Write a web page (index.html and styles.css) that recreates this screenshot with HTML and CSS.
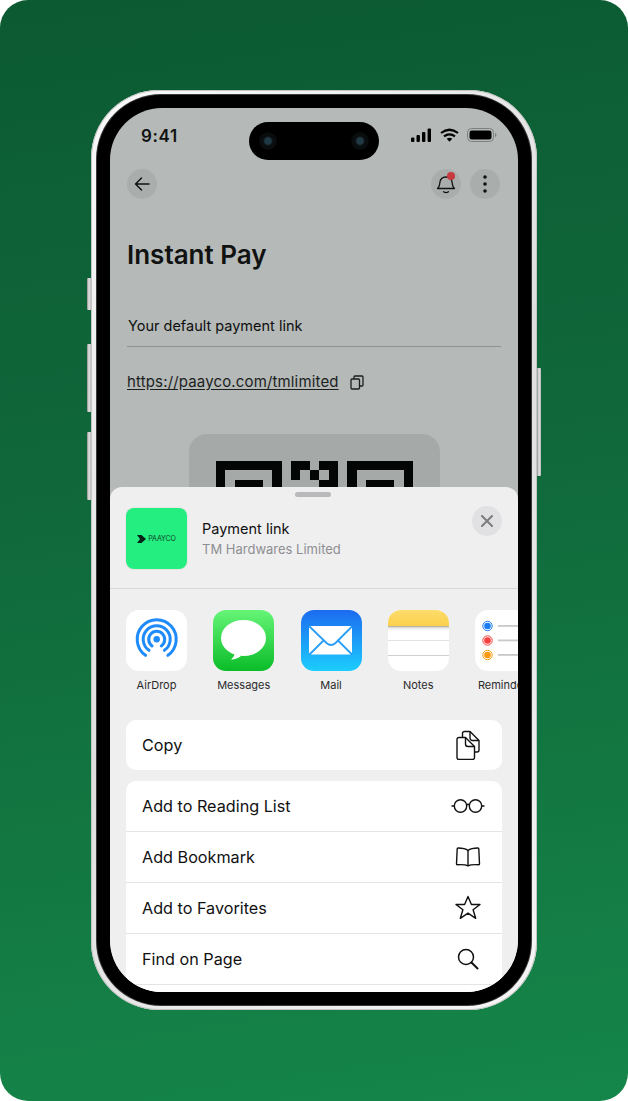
FILE: index.html
```html
<!DOCTYPE html>
<html lang="en">
<head>
<meta charset="utf-8">
<title>Instant Pay</title>
<link rel="stylesheet" href="styles.css">
</head>
<body>
<main class="card">
  <div class="phone">
    <span class="key key-a"></span><span class="key key-b"></span><span class="key key-c"></span><span class="key key-d"></span>
    <div class="bezel">
      <div class="screen">
        <div class="status">
          <span class="time">9:41</span>
          <div class="island">
            <span class="lens"></span><span class="lens"></span>
          </div>
          <div class="status-icons">
            <svg width="21" height="14" viewBox="0 0 21 14"><rect x="0" y="9.5" width="3.4" height="4.5" rx="1"/><rect x="5.5" y="7" width="3.4" height="7" rx="1"/><rect x="11" y="4" width="3.4" height="10" rx="1"/><rect x="16.6" y="0.5" width="3.4" height="13.5" rx="1"/></svg>
            <svg width="19" height="14" viewBox="0 0 19 14" fill="none" stroke="#000" stroke-width="2.2"><path d="M1 5q8.500-6.500 17 0"/><path d="M4 8.300q5.500-4 11 0"/><path d="M9.500 13.800 6.700 10.800q2.800-2 5.600 0z" fill="#000" stroke="none"/></svg>
            <svg width="30" height="14" viewBox="0 0 30 14"><rect x="0.500" y="0.500" width="26" height="13" rx="4" fill="none" stroke="#7d807f"/><rect x="2.500" y="2.500" width="22" height="9" rx="2.300"/><path d="M28 5v4q1.500-.6 1.500-2T28 5z" fill="#7d807f"/></svg>
          </div>
        </div>

        <div class="content">
          <nav class="nav">
            <span class="round"><svg width="18" height="18" viewBox="0 0 18 18" fill="none" stroke="#111" stroke-width="1.500" stroke-linecap="round" stroke-linejoin="round"><path d="M16 9H2.500M8.500 3l-6 6 6 6"/></svg></span>
            <span class="nav-right">
              <span class="round bell">
                <svg width="20" height="22" viewBox="0 0 20 22" fill="none" stroke="#111" stroke-width="1.300" stroke-linecap="round" stroke-linejoin="round"><path d="M1.500 15.500c1.500-1 2-2.500 2.300-5.500.3-3.500 2.500-6 6.200-6s5.900 2.500 6.200 6c.3 3 .8 4.500 2.300 5.500z"/><path d="M7.500 18.800q2.500 1.700 5 0"/></svg>
                <span class="badge"></span>
              </span>
              <span class="round"><svg width="4" height="18" viewBox="0 0 4 18" fill="#111"><circle cx="2" cy="2" r="1.800"/><circle cx="2" cy="9" r="1.800"/><circle cx="2" cy="16" r="1.800"/></svg></span>
            </span>
          </nav>
          <h1 class="title">Instant Pay</h1>
          <p class="label">Your default payment link</p>
          <div class="url-row">
            <a class="url">https://paayco.com/tmlimited</a>
            <svg width="14" height="15" viewBox="0 0 14 15" fill="none" stroke="#1c1f1e" stroke-width="1.300" stroke-linejoin="round"><rect x="1" y="4" width="8.500" height="10" rx="1"/><path d="M4 4V2a1 1 0 0 1 1-1h7a1 1 0 0 1 1 1v8a1 1 0 0 1-1 1H9.500"/></svg>
          </div>
          <div class="qr">
            <svg class="qr-code" width="197" height="197" viewBox="0 0 21 21" shape-rendering="crispEdges"><path d="M0 0h7v7H0zM1 1v5h5V1zM2 2h3v3H2zM14 0h7v7h-7zM15 1v5h5V1zM16 2h3v3h-3zM8 0h2v1H8zM11 0h2v1h-2zM8 1h1v1H8zM10 1h1v1h-1zM12 1h1v1h-1zM11 2h2v1h-2z" fill-rule="evenodd" fill="#040605"/></svg>
          </div>
        </div>

        <section class="sheet">
          <div class="grabber"></div>
          <header class="sheet-head">
            <div class="thumb">
              <svg width="9" height="8" viewBox="0 0 9 8"><path d="M0 0h4.500L9 4 4.500 8H0l3-4z" fill="#04241a"/></svg>
              <span class="thumb-text">PAAYCO</span>
            </div>
            <div class="sheet-title">
              <div class="sheet-name">Payment link</div>
              <div class="sheet-sub">TM Hardwares Limited</div>
            </div>
            <span class="close"><svg width="12" height="12" viewBox="0 0 12 12" fill="none" stroke="#7c7c80" stroke-width="2" stroke-linecap="round"><path d="M1 1l10 10M11 1L1 11"/></svg></span>
          </header>

          <div class="apps">
            <div class="app">
              <svg class="app-icon" width="61" height="61" viewBox="0 0 61 61"><rect width="61" height="61" rx="13" fill="#fff"/><g fill="none" stroke="#1f8bfb" stroke-width="3" stroke-linecap="round"><path d="M19.500 45.300A19.500 19.500 0 1 1 41.900 45.300"/><path d="M23 40.300A13.500 13.500 0 1 1 38.400 40.300"/><path d="M26.100 35.900A8 8 0 1 1 35.300 35.900"/></g><circle cx="30.700" cy="29.300" r="3.200" fill="#1f8bfb"/></svg>
              <span class="app-name">AirDrop</span>
            </div>
            <div class="app">
              <svg class="app-icon" width="61" height="61" viewBox="0 0 61 61"><defs><linearGradient id="msg" x1="0" y1="0" x2="0" y2="1"><stop offset="0" stop-color="#66f577"/><stop offset="1" stop-color="#0abc28"/></linearGradient></defs><rect width="61" height="61" rx="13" fill="url(#msg)"/><ellipse cx="30.500" cy="28" rx="22.500" ry="18" fill="#fff"/><path d="M22 42c0 3-2 6-4 7.500 3 .3 7-1 10-3.500z" fill="#fff"/></svg>
              <span class="app-name">Messages</span>
            </div>
            <div class="app">
              <svg class="app-icon" width="61" height="61" viewBox="0 0 61 61"><defs><linearGradient id="mail" x1="0" y1="0" x2="0" y2="1"><stop offset="0" stop-color="#1c6bf0"/><stop offset="1" stop-color="#1ccdfd"/></linearGradient></defs><rect width="61" height="61" rx="13" fill="url(#mail)"/><rect x="8" y="16" width="43" height="28.500" rx="2" fill="#fff"/><path d="M8.500 16.500 25.500 33q4.500 4 9 0l16.500-16.500M8.500 44.500l14-14M51 44.500l-14-14" fill="none" stroke="#2a9df6" stroke-width="1.800"/></svg>
              <span class="app-name">Mail</span>
            </div>
            <div class="app">
              <svg class="app-icon" width="61" height="61" viewBox="0 0 61 61"><defs><linearGradient id="note" x1="0" y1="0" x2="0" y2="1"><stop offset="0" stop-color="#fcdc6c"/><stop offset="1" stop-color="#fbd04c"/></linearGradient><clipPath id="noteclip"><rect width="61" height="61" rx="13"/></clipPath></defs><g clip-path="url(#noteclip)"><rect width="61" height="61" fill="#fff"/><rect width="61" height="16" fill="url(#note)"/><rect y="16" width="61" height="1.500" fill="#b8b6a8"/><rect y="18" width="61" height="1.500" fill="#ececec"/><rect y="30" width="61" height="1" fill="#e2e2e2"/><rect y="45" width="61" height="1" fill="#d0d0d0"/></g></svg>
              <span class="app-name">Notes</span>
            </div>
            <div class="app">
              <svg class="app-icon" width="61" height="61" viewBox="0 0 61 61"><rect width="61" height="61" rx="13" fill="#fff"/><g fill="none" stroke-width="1"><circle cx="12.500" cy="16" r="4.700" stroke="#1b7cf5"/><circle cx="12.500" cy="30.500" r="4.700" stroke="#f9403c"/><circle cx="12.500" cy="45" r="4.700" stroke="#fb9a0e"/></g><circle cx="12.500" cy="16" r="3.300" fill="#1b7cf5"/><circle cx="12.500" cy="30.500" r="3.300" fill="#f9403c"/><circle cx="12.500" cy="45" r="3.300" fill="#fb9a0e"/><g fill="#c9c9cb"><rect x="23" y="15" width="38" height="1.800"/><rect x="23" y="29.500" width="38" height="1.800"/><rect x="23" y="44" width="38" height="1.800"/></g></svg>
              <span class="app-name">Reminders</span>
            </div>
          </div>

          <div class="group">
            <div class="row row-first">
              <span>Copy</span>
              <svg width="26" height="30" viewBox="0 0 26 30" fill="none" stroke="#111" stroke-width="1.400" stroke-linejoin="round"><path d="M7.500 7V3.500a2 2 0 0 1 2-2H15l9 9V20a2 2 0 0 1-2 2h-2.500"/><path d="M15 1.500V8a2.500 2.500 0 0 0 2.500 2.500H24"/><path d="M2 9.500a2 2 0 0 1 2-2h6.500l9 9v11a2 2 0 0 1-2 2H4a2 2 0 0 1-2-2z"/><path d="M10.500 7.500V14a2.500 2.500 0 0 0 2.500 2.500h6.500"/></svg>
            </div>
          </div>
          <div class="group group-list">
            <div class="row">
              <span>Add to Reading List</span>
              <svg width="34" height="16" viewBox="0 0 34 16" fill="none" stroke="#111" stroke-width="1.400" stroke-linecap="round"><circle cx="9.500" cy="8" r="6.200"/><circle cx="24.500" cy="8" r="6.200"/><path d="M15.700 7q1.800-1.500 2.600 0M3.300 8H1M30.700 8H33"/></svg>
            </div>
            <div class="row">
              <span>Add Bookmark</span>
              <svg width="26" height="20" viewBox="0 0 26 20" fill="none" stroke="#111" stroke-width="1.400" stroke-linejoin="round"><path d="M13 3.500C11 1.800 8 1 3 1 2.500 1 2.200 1.300 2.200 1.800L1.500 17c0 .4.300.7.700.7C7 17.500 10.800 17.500 13 19c2.200-1.500 6-1.500 10.800-1.300.4 0 .7-.3.700-.7l-.7-15.200c0-.5-.3-.8-.8-.8C18 1 15 1.800 13 3.500z"/><path d="M13 3.500V19"/></svg>
            </div>
            <div class="row">
              <span>Add to Favorites</span>
              <svg width="26" height="25" viewBox="0 0 26 25" fill="none" stroke="#111" stroke-width="1.400" stroke-linejoin="round"><path d="M13 1.500l3.400 8h8.600l-6.900 5.300 2.600 8.500L13 18.200l-7.700 5.100 2.600-8.500L1 9.500h8.600z"/></svg>
            </div>
            <div class="row">
              <span>Find on Page</span>
              <svg width="22" height="22" viewBox="0 0 22 22" fill="none" stroke="#111" stroke-width="1.500" stroke-linecap="round"><circle cx="9" cy="9" r="7.500"/><path d="M14.500 14.500l6 6" stroke-width="2"/></svg>
            </div>
            <div class="row"></div>
          </div>
        </section>
      </div>
    </div>
  </div>
</main>
</body>
</html>
```

FILE: styles.css
```css
* { box-sizing: border-box; }
html, body { margin: 0; padding: 0; background: #fff; }
body { font-family: Inter, "Liberation Sans", sans-serif; }
.card {
  width: 628px;
  height: 1101px;
  border-radius: 28px;
  overflow: hidden;
  padding-top: 90px;
  display: flex;
  justify-content: center;
  align-items: flex-start;
  background: linear-gradient(172deg, #0c5a32 0%, #10693b 45%, #158649 100%);
}
.phone {
  position: relative;
  width: 446px;
  height: 920px;
  padding: 5px 6px;
  border-radius: 68px;
  background: linear-gradient(135deg, #fafafa, #dddedd 50%, #f6f6f6);
  box-shadow: inset 0 0 0 1px #c4c6c5;
}
.key { position: absolute; width: 4px; background: linear-gradient(90deg, #8d8f8e, #e6e6e6 50%, #b6b8b7); border-radius: 1px 0 0 1px; }
.key-a { left: -4px; top: 188px; height: 32px; }
.key-b { left: -4px; top: 254px; height: 68px; }
.key-c { left: -4px; top: 342px; height: 68px; }
.key-d { right: -4px; top: 278px; height: 108px; border-radius: 0 1px 1px 0; }
.bezel {
  height: 100%;
  padding: 13px;
  border-radius: 64px;
  background: #000;
  box-shadow: 0 0 0 1px #3a3a3a;
}
.screen {
  position: relative;
  height: 100%;
  border-radius: 52px;
  overflow: hidden;
  background: #b5b9b7;
  color: #101211;
}
.status {
  display: grid;
  grid-template-columns: 1fr 130px 1fr;
  padding: 14px 21px 0;
  align-items: center;
}
.time { padding-left: 10px; margin-top: -10px; font-size: 17px; font-weight: 600; line-height: 28px; letter-spacing: .6px; }
.island {
  width: 130px;
  height: 38px;
  border-radius: 19px;
  background: #000;
  display: flex;
  justify-content: space-between;
  align-items: center;
  padding: 0 10px;
}
.lens {
  width: 18px;
  height: 18px;
  border-radius: 50%;
  background: radial-gradient(circle, #1f3a45 0 3px, #0a0d0e 5px 8px, #060606 9px);
}
.status-icons {
  display: flex;
  justify-content: flex-end;
  align-items: center;
  gap: 8px;
  margin-top: -12px;
}
.content { padding: 9px 17px 0; }
.nav { display: flex; justify-content: space-between; align-items: center; }
.nav-right { display: flex; gap: 9px; margin-right: 1px; }
.round {
  position: relative;
  width: 30px;
  height: 30px;
  border-radius: 50%;
  background: #a9aead;
  display: flex;
  align-items: center;
  justify-content: center;
}
.badge {
  position: absolute;
  top: 3px;
  right: 6px;
  width: 8px;
  height: 8px;
  border-radius: 50%;
  background: #c73a3e;
}
.title { margin: 39px 0 0; font-size: 26px; line-height: 34px; font-weight: 600; }
.label {
  margin: 44px 0 0;
  padding: 0 0 10px 1px;
  font-size: 14.500px;
  line-height: 20px;
  color: #0d0f0e;
  border-bottom: 1px solid #8e9392;
}
.url-row { display: flex; align-items: center; gap: 11px; margin-top: 25px; height: 20px; }
.url { font-size: 15px; line-height: 20px; text-decoration: underline; text-underline-offset: 2px; letter-spacing: .15px; color: #1c1f1e; }
.qr {
  width: 251px;
  height: 260px;
  margin: 42px 0 0 62px;
  padding: 27px;
  border-radius: 18px;
  background: #a5aaa8;
}
.qr-code { display: block; }
.sheet {
  position: absolute;
  left: 0;
  right: 0;
  top: 379px;
  bottom: 0;
  border-radius: 12px 12px 0 0;
  background: #efefef;
  overflow: hidden;
}
.grabber { width: 36px; height: 5px; margin: 5px auto 0; transform: translateX(-1px); border-radius: 3px; background: #b9b9bb; }
.sheet-head {
  display: flex;
  align-items: center;
  gap: 15px;
  padding: 11px 16px 19px;
  border-bottom: 1px solid #d8d8d9;
}
.thumb {
  width: 61px;
  height: 61px;
  flex: none;
  border-radius: 8px;
  background: #25ee80;
  display: flex;
  align-items: center;
  justify-content: center;
  gap: 2px;
  box-shadow: 0 0 2px rgba(0,0,0,.12);
}
.thumb-text { font-size: 7px; line-height: 8px; color: #0c3a26; letter-spacing: -.1px; }
.sheet-title { flex: 1; }
.sheet-name { font-size: 14.500px; line-height: 20px; color: #111; }
.sheet-sub { font-size: 13px; line-height: 20px; color: #8e8e93; }
.close {
  align-self: flex-start;
  margin-top: -2px;
  width: 30px;
  height: 30px;
  border-radius: 50%;
  background: #e1e1e3;
  display: flex;
  align-items: center;
  justify-content: center;
}
.apps { display: flex; gap: 26.250px; padding: 21px 0 0 16px; overflow: hidden; height: 103px; }
.app { width: 61px; flex: none; display: flex; flex-direction: column; align-items: center; }
.app-icon { display: block; flex: none; }
.app-name { margin-top: 7px; font-size: 11px; line-height: 14px; color: #2a2a2c; white-space: nowrap; }
.group { margin: 28px 16px 0; background: #fff; border-radius: 10px; overflow: hidden; }
.group-list { margin-top: 11px; border-radius: 10px 10px 0 0; overflow: visible; }
.row {
  height: 51px;
  display: flex;
  align-items: center;
  justify-content: space-between;
  padding: 0 17px 1px 16px;
  font-size: 16.200px;
  color: #111;
  border-bottom: 1px solid #e4e4e6;
}
.row-first { height: 50px; border-bottom: 0; padding-bottom: 0; }
.row svg { display: block; flex: none; }
.row-first svg { margin-right: 4px; }
.group-list .row:nth-child(2) svg { margin-right: 4px; }
.group-list .row:nth-child(3) svg { margin-right: 4px; }
.group-list .row:nth-child(4) svg { margin-right: 6px; }
```
